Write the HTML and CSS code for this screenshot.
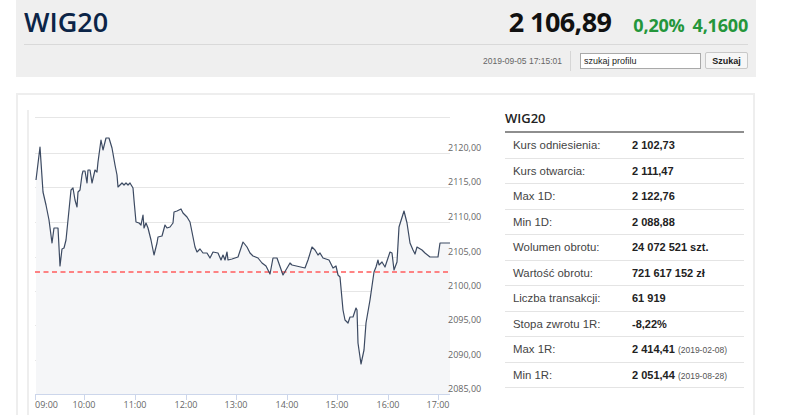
FILE: index.html
```html
<!DOCTYPE html>
<html lang="pl">
<head>
<meta charset="utf-8">
<title>WIG20</title>
<link rel="stylesheet" href="styles.css">
</head>
<body>
<div class="page">
  <header class="quote">
    <div class="quote-top">
      <h1 class="title">WIG20</h1>
      <div class="price">
        <span class="last">2 106,89</span>
        <span class="chg">0,20%</span>
        <span class="chg">4,1600</span>
      </div>
    </div>
    <div class="quote-bottom">
      <span class="date">2019-09-05 17:15:01</span>
      <span class="vsep"></span>
      <form class="search">
        <input class="search-input" type="text" value="szukaj profilu">
        <button class="search-btn" type="button">Szukaj</button>
      </form>
    </div>
  </header>

  <section class="panel">
    <div class="chart-col">
      <div class="chart">
        <svg class="chart-svg" width="461" height="305" viewBox="29 110 461 305" xmlns="http://www.w3.org/2000/svg">
          <g class="grid" stroke="#e6e6e6" stroke-width="1">
            <line x1="35" y1="117.5" x2="450" y2="117.5"/>
            <line x1="35" y1="153.5" x2="450" y2="153.5"/>
            <line x1="35" y1="187.5" x2="450" y2="187.5"/>
            <line x1="35" y1="222.5" x2="450" y2="222.5"/>
            <line x1="35" y1="257.5" x2="450" y2="257.5"/>
            <line x1="35" y1="291.5" x2="450" y2="291.5"/>
            <line x1="35" y1="325.5" x2="450" y2="325.5"/>
            <line x1="35" y1="360.5" x2="450" y2="360.5"/>
          </g>
          <polygon fill="#f5f6f8" points="36,180 40,147 43,192 46,205 49,220 52,243 54,228 58,228 60,266 62,249 64,248 66,240 69,210 71,190 73,188 75,200 77,207 78,192 80,190 82,175 83,171 85,171 87,183 88,170 90,170 92,183 95,170 97,172 98,162 101,140 103,150 106,138 109,138 112,148 115,165 117,175 118,187 122,183 124,185 126,183 128,185 130,183 133,188 134,200 136,222 139,223 141,225 143,215 144,228 146,223 148,228 151,240 154,255 157,243 158,237 162,236 165,225 167,228 170,227 173,223 174,212 177,211 181,209 183,213 187,217 190,222 195,247 197,252 200,249 203,253 207,253 210,258 213,252 218,253 221,260 223,255 225,260 227,252 228,260 232,259 235,258 238,257 243,242 247,247 250,253 253,256 258,258 262,263 266,266 270,274 273,258 277,258 283,275 290,263 292,265 305,268 308,260 312,247 315,250 318,255 320,253 323,258 329,260 333,268 336,266 338,275 340,277 343,310 345,320 348,323 350,317 353,317 356,308 357,310 358,343 361,364 364,350 366,323 370,300 374,272 376,267 378,260 379,265 382,262 385,267 390,252 392,253 394,270 397,262 399,227 404,211 407,223 410,243 413,250 415,254 417,247 422,250 425,253 430,257 438,257 440,243 450,243 450,394 36,394"/>
          <line x1="35" y1="272" x2="450" y2="272" stroke="#ff5c5c" stroke-width="1.3" stroke-dasharray="5 3.5"/>
          <polyline fill="none" stroke="#3c4a62" stroke-width="1.2" stroke-linejoin="round" points="36,180 40,147 43,192 46,205 49,220 52,243 54,228 58,228 60,266 62,249 64,248 66,240 69,210 71,190 73,188 75,200 77,207 78,192 80,190 82,175 83,171 85,171 87,183 88,170 90,170 92,183 95,170 97,172 98,162 101,140 103,150 106,138 109,138 112,148 115,165 117,175 118,187 122,183 124,185 126,183 128,185 130,183 133,188 134,200 136,222 139,223 141,225 143,215 144,228 146,223 148,228 151,240 154,255 157,243 158,237 162,236 165,225 167,228 170,227 173,223 174,212 177,211 181,209 183,213 187,217 190,222 195,247 197,252 200,249 203,253 207,253 210,258 213,252 218,253 221,260 223,255 225,260 227,252 228,260 232,259 235,258 238,257 243,242 247,247 250,253 253,256 258,258 262,263 266,266 270,274 273,258 277,258 283,275 290,263 292,265 305,268 308,260 312,247 315,250 318,255 320,253 323,258 329,260 333,268 336,266 338,275 340,277 343,310 345,320 348,323 350,317 353,317 356,308 357,310 358,343 361,364 364,350 366,323 370,300 374,272 376,267 378,260 379,265 382,262 385,267 390,252 392,253 394,270 397,262 399,227 404,211 407,223 410,243 413,250 415,254 417,247 422,250 425,253 430,257 438,257 440,243 450,243"/>
          <g class="axis" stroke="#ccd6eb" stroke-width="1">
            <line x1="35" y1="394.5" x2="450" y2="394.5"/>
            <line x1="35.5" y1="394" x2="35.5" y2="400"/>
            <line x1="84.5" y1="394" x2="84.5" y2="400"/>
            <line x1="135.5" y1="394" x2="135.5" y2="400"/>
            <line x1="186.5" y1="394" x2="186.5" y2="400"/>
            <line x1="236.5" y1="394" x2="236.5" y2="400"/>
            <line x1="287.5" y1="394" x2="287.5" y2="400"/>
            <line x1="337.5" y1="394" x2="337.5" y2="400"/>
            <line x1="388.5" y1="394" x2="388.5" y2="400"/>
            <line x1="438.5" y1="394" x2="438.5" y2="400"/>
          </g>
          <g class="ylabels">
            <text x="448" y="151">2120,00</text>
            <text x="448" y="185">2115,00</text>
            <text x="448" y="220">2110,00</text>
            <text x="448" y="255">2105,00</text>
            <text x="448" y="289">2100,00</text>
            <text x="448" y="323">2095,00</text>
            <text x="448" y="358">2090,00</text>
            <text x="448" y="392">2085,00</text>
          </g>
          <g class="xlabels">
            <text x="35" y="408">09:00</text>
            <text x="84" y="408" text-anchor="middle">10:00</text>
            <text x="135" y="408" text-anchor="middle">11:00</text>
            <text x="186" y="408" text-anchor="middle">12:00</text>
            <text x="236" y="408" text-anchor="middle">13:00</text>
            <text x="287" y="408" text-anchor="middle">14:00</text>
            <text x="337" y="408" text-anchor="middle">15:00</text>
            <text x="388" y="408" text-anchor="middle">16:00</text>
            <text x="438" y="408" text-anchor="middle">17:00</text>
          </g>
        </svg>
      </div>
    </div>

    <div class="stats">
      <h2 class="stats-title">WIG20</h2>
      <div class="row"><span class="k">Kurs odniesienia:</span><span class="v">2 102,73</span></div>
      <div class="row"><span class="k">Kurs otwarcia:</span><span class="v">2 111,47</span></div>
      <div class="row"><span class="k">Max 1D:</span><span class="v">2 122,76</span></div>
      <div class="row"><span class="k">Min 1D:</span><span class="v">2 088,88</span></div>
      <div class="row"><span class="k">Wolumen obrotu:</span><span class="v">24 072 521 szt.</span></div>
      <div class="row"><span class="k">Wartość obrotu:</span><span class="v">721 617 152 zł</span></div>
      <div class="row"><span class="k">Liczba transakcji:</span><span class="v">61 919</span></div>
      <div class="row"><span class="k">Stopa zwrotu 1R:</span><span class="v">-8,22%</span></div>
      <div class="row"><span class="k">Max 1R:</span><span class="v">2 414,41 <small class="d">(2019-02-08)</small></span></div>
      <div class="row"><span class="k">Min 1R:</span><span class="v">2 051,44 <small class="d">(2019-08-28)</small></span></div>
    </div>
  </section>
</div>
</body>
</html>
```

FILE: styles.css
```css
html, body {
  margin: 0;
  padding: 0;
  background: #ffffff;
  font-family: "Liberation Sans", Arial, sans-serif;
  color: #333;
}

.page {
  padding-left: 16px;
  width: 740px;
}

/* ---------- header ---------- */
.quote {
  background: #efefef;
  height: 77px;
  padding: 0 8px;
  box-sizing: border-box;
}

.quote-top {
  display: flex;
  justify-content: space-between;
  align-items: baseline;
  height: 45px;
  padding-top: 3px;
  box-sizing: border-box;
  border-bottom: 1px solid #d9d9d9;
}

.title {
  margin: 0;
  font-family: "Open Sans", sans-serif;
  font-weight: 600;
  font-size: 27px;
  line-height: 38px;
  color: #0b2447;
}

.price {
  display: flex;
  align-items: baseline;
  font-family: "Open Sans", sans-serif;
  font-weight: 700;
}

.last {
  font-size: 27px;
  line-height: 38px;
  color: #111;
  letter-spacing: -0.6px;
  margin-right: 14px;
}

.chg {
  font-size: 18px;
  color: #24963b;
  margin-left: 8px;
  letter-spacing: -0.2px;
}

.chg:first-of-type { margin-left: 0; }

.quote-bottom {
  display: flex;
  justify-content: flex-end;
  align-items: center;
  height: 31px;
}

.date {
  font-size: 8.5px;
  color: #666;
  margin-right: 8px;
}

.vsep {
  width: 1px;
  height: 20px;
  background: #d6d6d6;
  margin-right: 9px;
}

.search {
  display: flex;
  align-items: center;
  margin: 0;
}

.search-input {
  width: 121px;
  height: 16px;
  box-sizing: border-box;
  border: 1px solid #a9a9a9;
  padding: 0 3px;
  font-family: "Liberation Sans", Arial, sans-serif;
  font-size: 9px;
  color: #222;
  background: #fff;
  outline: none;
}

.search-btn {
  margin-left: 4px;
  width: 43px;
  height: 17px;
  box-sizing: border-box;
  border: 1px solid #c8c8c8;
  border-radius: 2px;
  background: #f6f6f6;
  font-family: "Liberation Sans", Arial, sans-serif;
  font-weight: 700;
  font-size: 9px;
  color: #222;
  padding: 0;
}

/* ---------- panel ---------- */
.panel {
  margin-top: 16px;
  width: 739px;
  height: 340px;
  box-sizing: border-box;
  border: 2px solid #eeeeee;
  display: flex;
}

.chart-col {
  flex: none;
  padding: 15px 0 0 9px;
}

.chart {
  border-left: 2px solid #eeeeee;
  height: 320px;
}

.chart-svg {
  display: block;
}

.ylabels text,
.xlabels text {
  font-family: "Open Sans", sans-serif;
  font-size: 9px;
  fill: #666;
}

.stats {
  width: 239px;
  margin-left: 15px;
  padding-top: 14px;
}

.stats-title {
  margin: 0;
  font-family: "Open Sans", sans-serif;
  font-weight: 600;
  font-size: 13px;
  line-height: 18px;
  color: #222;
  padding-bottom: 4px;
  border-bottom: 2px solid #8e8e8e;
}

.row {
  display: grid;
  grid-template-columns: 127px 1fr;
  align-items: center;
  height: 25.5px;
  box-sizing: border-box;
  border-bottom: 1px solid #e4e4e4;
  font-size: 11.4px;
}

.k {
  padding-left: 8px;
  color: #444;
}

.v {
  font-weight: 700;
  color: #222;
  white-space: nowrap;
  font-size: 11px;
}

.d {
  font-size: 8.5px;
  font-weight: 400;
  color: #555;
}
```
